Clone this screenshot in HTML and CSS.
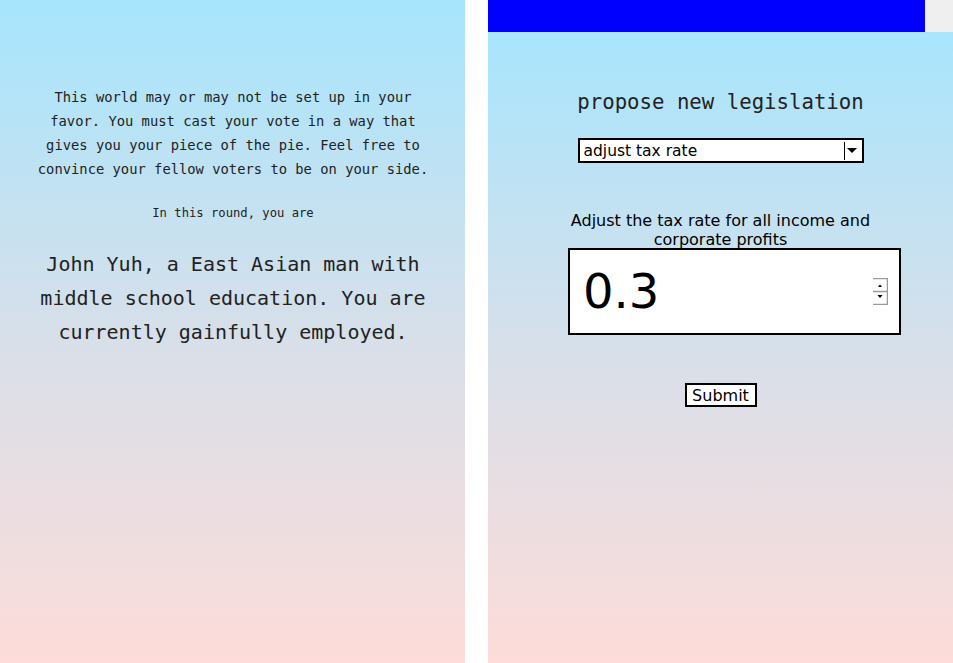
FILE: index.html
```html
<!DOCTYPE html>
<html>
<head>
<meta charset="utf-8">
<link rel="stylesheet" href="styles.css">
</head>
<body>
<div class="page">
  <section class="panel left">
    <p class="intro">This world may or may not be set up in your favor. You must cast your vote in a way that gives you your piece of the pie. Feel free to convince your fellow voters to be on your side.</p>
    <p class="round">In this round, you are</p>
    <p class="identity">John Yuh, a East Asian man with middle school education. You are currently gainfully employed.</p>
  </section>
  <div class="gap"></div>
  <section class="right">
    <div class="topbar"><div class="bar-blue"></div><div class="bar-gray"></div></div>
    <div class="panel content">
      <h1 class="title">propose new legislation</h1>
      <div class="select">
        <span class="select-text">adjust tax rate</span>
        <span class="select-sep"></span>
        <svg class="select-arrow" width="10" height="6" viewBox="0 0 10 6"><polygon points="0,0 10,0 5,5" fill="#000"/></svg>
      </div>
      <div class="field">
        <label class="field-label">Adjust the tax rate for all income and corporate profits</label>
        <div class="number">
          <span class="number-value">0.3</span>
          <svg class="spin" width="15" height="27" viewBox="0 0 15 27">
            <path d="M0 0.5H14.5V26.5H0M0 13.5H14.5" fill="none" stroke="#9a9a9a" stroke-width="1.5"/>
            <polygon points="5,9 9,9 7,6.5" fill="#000"/>
            <polygon points="4.5,17 9.5,17 7,20" fill="#000"/>
          </svg>
        </div>
      </div>
      <button class="submit">Submit</button>
    </div>
  </section>
</div>
</body>
</html>
```
FILE: styles.css
```css
html, body {
  margin: 0;
  padding: 0;
  background: #fff;
}
.page {
  display: flex;
  width: 953px;
  height: 663px;
}
.panel {
  background: linear-gradient(to bottom, #a6e5fd 0%, #dbdfe8 55%, #fddcd9 100%);
}
.left {
  width: 465px;
  height: 663px;
  box-sizing: border-box;
  padding: 85px 32px 0 33px;
  display: flex;
  flex-direction: column;
  align-items: center;
  font-family: "DejaVu Sans Mono", monospace;
  color: #222;
  text-align: center;
}
.gap {
  width: 23px;
  flex: none;
}
.intro {
  margin: 0;
  font-size: 13.8px;
  line-height: 24px;
}
.round {
  margin: 24px 0 0;
  font-size: 12.2px;
  line-height: 16px;
}
.identity {
  margin: 26px 0 0;
  font-size: 20px;
  line-height: 34px;
}
.right {
  width: 465px;
  display: flex;
  flex-direction: column;
}
.topbar {
  display: flex;
  height: 32px;
  flex: none;
}
.bar-blue {
  width: 437px;
  background: #0000ff;
}
.bar-gray {
  flex: 1;
  background: #efefef;
}
.content {
  flex: 1;
  display: flex;
  flex-direction: column;
  align-items: center;
  background: linear-gradient(to bottom, #a8e5fd 0%, #dbdfe8 55%, #fddcd9 100%);
}
.title {
  margin: 56px 0 0;
  font-family: "DejaVu Sans Mono", monospace;
  font-weight: normal;
  font-size: 20.7px;
  line-height: 28px;
  color: #222;
}
.select {
  margin-top: 22px;
  width: 286px;
  height: 25px;
  box-sizing: border-box;
  border: 2px solid #000;
  background: #fff;
  display: flex;
  align-items: center;
  font-family: "DejaVu Sans", sans-serif;
  font-size: 15.5px;
  color: #000;
  padding-left: 4px;
}
.select-text {
  flex: 1;
  line-height: 20px;
  margin-top: 1px;
}
.select-sep {
  width: 1px;
  height: 18px;
  background: #000;
  margin-right: 2px;
}
.select-arrow {
  margin-right: 5px;
  margin-top: 1px;
}
.field {
  margin-top: 57px;
  width: 333px;
  display: flex;
  flex-direction: column;
  align-items: flex-start;
}
.field-label {
  align-self: stretch;
  font-family: "DejaVu Sans", sans-serif;
  font-size: 16px;
  line-height: 19px;
  text-align: center;
  color: #000;
  margin-top: -9px;
}
.number {
  margin-top: -1px;
  margin-left: 14px;
  width: 333px;
  height: 87px;
  box-sizing: border-box;
  border: 2px solid #000;
  background: #fff;
  display: flex;
  align-items: center;
  padding: 0 11px 0 13px;
}
.number-value {
  flex: 1;
  font-family: "DejaVu Sans", sans-serif;
  font-size: 48px;
  line-height: 56px;
  color: #000;
  margin-top: -1px;
}
.spin {
  display: block;
  margin-top: 0;
}
.submit {
  margin-top: 48px;
  width: 72px;
  height: 24px;
  box-sizing: border-box;
  border: 2px solid #000;
  background: #fff;
  padding: 0;
  font-family: "DejaVu Sans", sans-serif;
  font-size: 16px;
  line-height: 19px;
  color: #000;
}
```
